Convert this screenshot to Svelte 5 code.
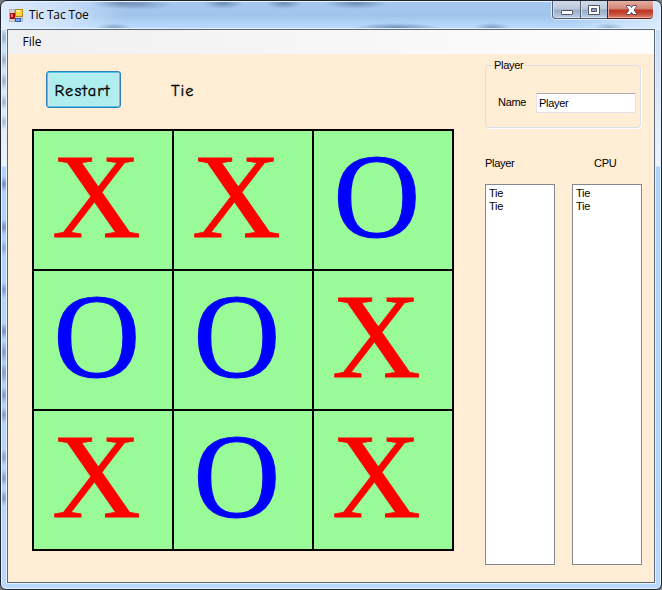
<script>
  let cells = $state(['X', 'X', 'O', 'O', 'O', 'X', 'X', 'O', 'X']);
  let playerName = $state('Player');
  let status = $state('Tie');
  let playerLog = $state(['Tie', 'Tie']);
  let cpuLog = $state(['Tie', 'Tie']);

  function restart() {
    cells = Array(9).fill('');
    status = '';
  }
</script>

<div class="desktop">
  <div class="window">
    <header class="titlebar">
      <svg class="app-icon" width="15" height="15" viewBox="0 0 15 15" shape-rendering="crispEdges">
        <rect x=".5" y=".5" width="13" height="12" fill="#d5d3cd" stroke="#b9b7b3" />
        <path d="M5.5 1v12M1 9.5h13M1 4.5h5" stroke="#b5b3b0" />
        <rect x="1" y="4" width="5" height="6" fill="#a50d0a" />
        <rect x="2" y="5" width="2" height="3" fill="#ff7661" />
        <rect x="6" y="0" width="8" height="8" fill="#b8861b" />
        <rect x="7" y="1" width="6" height="6" fill="#ffd33b" />
        <rect x="7" y="1" width="4" height="2" fill="#fff1a0" />
        <rect x="6" y="9" width="6" height="4" fill="#2c5fc5" />
        <rect x="7" y="10" width="4" height="2" fill="#78a8fa" />
      </svg>
      <h1>Tic Tac Toe</h1>
      <div class="controls">
        <span class="ctl min">
          <svg width="27" height="17" viewBox="0 0 27 17"><rect x="8.5" y="9.5" width="11" height="4" rx=".6" fill="#fff" stroke="#535666" /></svg>
        </span>
        <span class="ctl max">
          <svg width="26" height="17" viewBox="0 0 26 17"><path d="M7.5 4.500h11v9h-11z" fill="#fff" stroke="#535666" /><path d="M10.500 7.500h5v3h-5z" fill="#8ea7c6" stroke="#535666" /></svg>
        </span>
        <span class="ctl close">
          <svg width="47" height="17" viewBox="0 0 47 17"><path d="M18.500 4.500h3.500l1.500 2 1.500-2h3.500v1.200L26 9l2.500 3.400v1.100H25L23.500 11.400l-1.500 2.100h-3.500v-1.100L21 9l-2.500-3.300z" fill="#fff" stroke="#56475a" /></svg>
        </span>
      </div>
    </header>

    <main class="client">
      <nav class="menu"><span>File</span></nav>
      <div class="form">
        <section class="game">
          <div class="toolbar">
            <button onclick={restart}><span>Restart</span></button>
            <output>{status}</output>
          </div>
          <div class="board">
            {#each cells as mark}
              <div class="cell" class:o={mark === 'O'}><span>{mark}</span></div>
            {/each}
          </div>
        </section>

        <aside class="side">
          <fieldset>
            <legend>Player</legend>
            <label for="name">Name</label>
            <input id="name" bind:value={playerName} />
          </fieldset>
          <div class="logs">
            <div class="log">
              <h2>Player</h2>
              <ul>{#each playerLog as entry}<li>{entry}</li>{/each}</ul>
            </div>
            <div class="log cpu">
              <h2>CPU</h2>
              <ul>{#each cpuLog as entry}<li>{entry}</li>{/each}</ul>
            </div>
          </div>
        </aside>
      </div>
    </main>
  </div>
</div>

<style>
  .desktop {
    width: 662px;
    height: 590px;
    background: #777;
    overflow: hidden;
  }
  .window {
    box-sizing: border-box;
    width: 662px;
    height: 590px;
    padding: 0 5px 4px;
    border: 1px solid #20242e;
    border-radius: 7px 7px 6px 6px;
    box-shadow: inset 0 0 0 1px #e8f4ff;
    background:
      radial-gradient(ellipse 30px 6px at 120px 2px, #6a83aabb, transparent),
      radial-gradient(ellipse 32px 6px at 140px 3px, #6a83aa99, transparent),
      radial-gradient(ellipse 20px 6px at 222px 2px, #5f7eabcc, transparent),
      radial-gradient(ellipse 18px 6px at 283px 2px, #5f7eabcc, transparent),
      radial-gradient(ellipse 32px 6px at 355px 2px, #5f7eabcc, transparent),
      radial-gradient(ellipse 44px 5px at 396px 27px, #54779fcc, transparent),
      radial-gradient(ellipse 18px 5px at 491px 27px, #54779faa, transparent),
      radial-gradient(ellipse 15px 5px at 608px 27px, #54779f77, transparent),
      radial-gradient(ellipse 18px 5px at 113px 27px, #54779f99, transparent),
      radial-gradient(ellipse 5px 8px at 3px 37px, #7f95b4aa, transparent),
      radial-gradient(ellipse 5px 8px at 3px 59px, #7f95b4aa, transparent),
      radial-gradient(ellipse 5px 8px at 3px 80px, #7f95b4aa, transparent),
      radial-gradient(ellipse 5px 8px at 3px 101px, #7f95b4aa, transparent),
      radial-gradient(ellipse 5px 8px at 3px 121px, #7f95b499, transparent),
      radial-gradient(ellipse 5px 8px at 3px 183px, #55739fbb, transparent),
      radial-gradient(ellipse 5px 8px at 3px 226px, #55739fbb, transparent),
      radial-gradient(ellipse 5px 8px at 3px 247px, #55739f77, transparent),
      radial-gradient(ellipse 5px 8px at 3px 289px, #55739f99, transparent),
      radial-gradient(ellipse 5px 8px at 3px 330px, #55739fbb, transparent),
      radial-gradient(ellipse 5px 11px at 3px 351px, #55739f99, transparent),
      radial-gradient(ellipse 5px 11px at 3px 372px, #55739f99, transparent),
      radial-gradient(ellipse 5px 9px at 3px 394px, #55739f99, transparent),
      radial-gradient(ellipse 5px 8px at 3px 414px, #55739f99, transparent),
      radial-gradient(ellipse 5px 8px at 3px 456px, #55739f88, transparent),
      radial-gradient(ellipse 5px 8px at 3px 477px, #55739f99, transparent),
      radial-gradient(ellipse 5px 8px at 3px 497px, #55739f99, transparent),
      linear-gradient(90deg, #eef5ffcc 0, #e5f0ff99 55px, transparent 125px) 0 0 / 100% 29px no-repeat,
      linear-gradient(90deg, transparent 570px, #edf5ffaa 660px) 0 0 / 100% 29px no-repeat,
      linear-gradient(#a5c8f1 0, #a1c4eb 15px, #b5d8fc 25px, #c5dcf5 30px, #d1e0f4 60px, #dce8fa 100px, #edf3ff 165px, #b0d2fb 166px, #b7d7fb 100%);
  }
  .titlebar {
    display: flex;
    height: 28px;
    padding-left: 3px;
    font-family: 'Open Sans', 'Noto Sans', sans-serif;
  }
  .app-icon {
    margin-top: 8px;
  }
  h1 {
    margin: 6px 0 0 5px;
    font-size: 12px;
    line-height: 16px;
    font-weight: 400;
    letter-spacing: -0.15px;
    color: #000;
    text-shadow: 0 0 6px #fff;
  }
  .controls {
    box-sizing: border-box;
    display: flex;
    width: 103px;
    height: 19px;
    margin: 0 2px 0 auto;
    border: 1px solid #e2edfa;
    border-top: 0;
    border-radius: 0 0 5px 5px;
  }
  .ctl {
    box-sizing: border-box;
    height: 18px;
    overflow: hidden;
    border-bottom: 1px solid #505a6c;
    border-left: 1px solid #535e71;
    background: linear-gradient(#d0dbe8 0, #b9c8dc 8px, #95abc7 9px, #b9d0e7 17px);
    box-shadow: inset 1px 0 #d8e3f0, inset 0 -1px #d8e3f0;
  }
  .ctl svg {
    display: block;
  }
  .min {
    width: 28px;
    border-bottom-left-radius: 4px;
  }
  .max {
    width: 27px;
  }
  .close {
    width: 46px;
    border-color: #5c1e1b;
    border-bottom-right-radius: 4px;
    background: linear-gradient(#e9aea2 0, #d18374 8px, #bd3423 9px, #c74c37 13px, #dc8c74 17px);
    box-shadow: inset 1px 0 #e6a89e, inset 0 -1px #e9aea2;
  }
  .client {
    box-sizing: border-box;
    width: 648px;
    height: 554px;
    margin-left: 1px;
    border: 1px solid #5b6679;
    box-shadow: 0 0 0 1px #e5f2ff;
    background: #ffedd5;
    font-family: 'Liberation Sans', Arial, sans-serif;
    color: #000;
  }
  .menu {
    height: 24px;
    padding-left: 14.5px;
    background: linear-gradient(90deg, #f0f0f0, #fdfdfd);
    font: 12px/24px 'Open Sans', 'Noto Sans', sans-serif;
  }
  .form {
    display: flex;
    justify-content: space-between;
    padding: 10px 12px 0 24px;
  }
  .game {
    width: 422px;
    padding-top: 7px;
  }
  .toolbar {
    display: flex;
    align-items: center;
    height: 37px;
    padding-left: 14px;
    margin-bottom: 21px;
    font: 16.5px/22px 'Comic Sans MS', 'Comic Neue', Lato, sans-serif;
    -webkit-text-stroke: 0.35px #000;
  }
  button {
    box-sizing: border-box;
    width: 75px;
    height: 37px;
    padding: 2px 2px 0 0;
    border: 1px solid #2c81bd;
    border-radius: 3px;
    background: #afeeee;
    box-shadow: inset 0 0 0 1px #41c9f2, inset 0 0 0 2px #d3e5e8;
    font: inherit;
    color: #000;
    letter-spacing: 1.05px;
  }
  output {
    margin: 2px 0 0 50px;
    letter-spacing: 0.9px;
  }
  .board {
    display: grid;
    grid-template-columns: repeat(3, 138px);
    grid-auto-rows: 138px;
    gap: 2px;
    padding: 2px;
    background: #000;
  }
  .cell {
    box-sizing: border-box;
    padding-left: 19px;
    background: #98fb98;
    font: 120px/131px 'Liberation Serif', 'Times New Roman', serif;
    color: #f00;
    -webkit-text-stroke: 0.8px #f00;
  }
  .cell span {
    display: inline-block;
    transform: scaleX(1.025);
  }
  .cell.o {
    padding-left: 19.5px;
    color: #00f;
    -webkit-text-stroke: 1.2px #00f;
  }
  .cell.o span {
    transform: none;
  }
  .side {
    width: 157px;
    font-size: 11px;
    line-height: 13px;
    letter-spacing: -0.3px;
  }
  fieldset {
    box-sizing: border-box;
    display: flex;
    align-items: center;
    width: 156px;
    height: 69px;
    margin: -5px 0 0;
    padding: 6px 4px 0 12px;
    border: 1px solid #d5dfe5;
    border-radius: 4px;
    box-shadow: 1px 1px #fff;
    clip-path: inset(0 -1px -1px 0);
  }
  legend {
    margin-left: -6px;
    padding: 0 2px;
  }
  label {
    flex: none;
    width: 38px;
  }
  input {
    box-sizing: border-box;
    flex: none;
    width: 100px;
    height: 20px;
    padding: 0 2px;
    border: 1px solid #e2e3ea;
    border-top-color: #abadb3;
    border-radius: 1px;
    background: #fff;
    font: inherit;
    letter-spacing: inherit;
    color: #000;
    outline: 0;
  }
  .logs {
    display: flex;
    justify-content: space-between;
    margin-top: 29px;
  }
  .log {
    width: 70px;
  }
  h2 {
    margin: 0 0 14px;
    font-size: 11px;
    line-height: 13px;
    font-weight: 400;
  }
  .cpu h2 {
    padding-left: 22px;
  }
  ul {
    box-sizing: border-box;
    height: 381px;
    margin: 0;
    padding: 2px 3px;
    border: 1px solid #828790;
    background: #fff;
    list-style: none;
  }
</style>
